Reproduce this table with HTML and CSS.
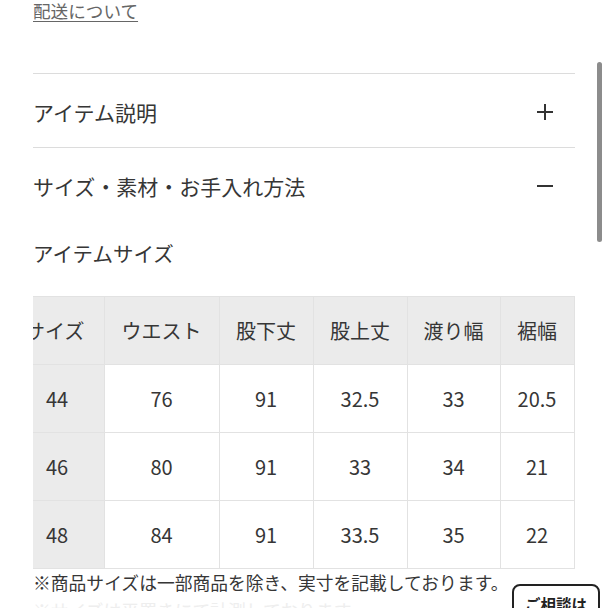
FILE: index.html
```html
<!DOCTYPE html>
<html lang="ja">
<head>
<meta charset="utf-8">
<link rel="stylesheet" href="styles.css">
</head>
<body>
<div class="page">
  <a class="ship-link" href="#">配送について</a>

  <section class="acc">
    <div class="acc-head">
      <span class="acc-title">アイテム説明</span>
      <span class="acc-icon plus"></span>
    </div>
  </section>

  <section class="acc open">
    <div class="acc-head">
      <span class="acc-title">サイズ・素材・お手入れ方法</span>
      <span class="acc-icon minus"></span>
    </div>
    <div class="acc-body">
      <h3 class="sub-title">アイテムサイズ</h3>
      <div class="table-wrap">
        <table class="size-table">
          <colgroup>
            <col class="c1"><col class="c2"><col class="c3"><col class="c4"><col class="c5"><col class="c6">
          </colgroup>
          <thead>
            <tr><th class="first">サイズ</th><th>ウエスト</th><th>股下丈</th><th>股上丈</th><th>渡り幅</th><th>裾幅</th></tr>
          </thead>
          <tbody>
            <tr><th class="first">44</th><td>76</td><td>91</td><td>32.5</td><td>33</td><td>20.5</td></tr>
            <tr><th class="first">46</th><td>80</td><td>91</td><td>33</td><td>34</td><td>21</td></tr>
            <tr><th class="first">48</th><td>84</td><td>91</td><td>33.5</td><td>35</td><td>22</td></tr>
          </tbody>
        </table>
      </div>
      <p class="note">※商品サイズは一部商品を除き、実寸を記載しております。</p>
      <p class="note faint">※サイズは平置きにて計測しております。</p>
    </div>
  </section>
</div>

<div class="scroll-thumb"></div>
<button class="chat-btn">ご相談は</button>
</body>
</html>
```

FILE: styles.css
```css
* { box-sizing: border-box; }

html, body {
  margin: 0;
  padding: 0;
  background: #fff;
  overflow: hidden;
}

body {
  font-family: "Noto Sans CJK JP", "Noto Sans", sans-serif;
  color: #363636;
}

.page {
  width: 542px;
  margin-left: 33px;
}

.ship-link {
  display: block;
  width: max-content;
  font-size: 17.6px;
  line-height: 22px;
  color: #666;
  text-decoration: underline;
  text-underline-offset: 3px;
  text-decoration-thickness: 1px;
  margin-bottom: 51px;
}

.acc {
  border-top: 1px solid #dcdcdc;
}

.acc-head {
  display: flex;
  align-items: center;
  justify-content: space-between;
  padding: 28px 0 25px;
}

.acc-title {
  font-size: 21px;
  line-height: 20px;
}

.acc-icon {
  position: relative;
  width: 16px;
  height: 16px;
  margin-right: 22px;
}

.acc-icon::before,
.acc-icon::after {
  content: "";
  position: absolute;
  background: #333;
}

.acc-icon::before {
  left: 0;
  top: 7px;
  width: 16px;
  height: 2px;
}

.plus::after {
  left: 7px;
  top: 0;
  width: 2px;
  height: 16px;
}

.minus::after { display: none; }

.acc-body {
  padding-top: 22px;
}

.sub-title {
  margin: 0;
  font-weight: normal;
  font-size: 20.5px;
  line-height: 20px;
}

.table-wrap {
  margin-top: 33px;
  width: 542px;
  overflow: hidden;
}

.size-table {
  width: 541px;
  border-collapse: collapse;
  table-layout: fixed;
  font-size: 20px;
}

.c1 { width: 71px; }
.c2 { width: 115px; }
.c3 { width: 94px; }
.c4 { width: 94px; }
.c5 { width: 93px; }
.c6 { width: 74px; }

.size-table th,
.size-table td {
  height: 68px;
  padding: 0;
  border: 1px solid #e2e2e2;
  text-align: center;
  font-weight: normal;
  white-space: nowrap;
  color: #363636;
}

.size-table thead th {
  background: #ebebeb;
}

.size-table th.first {
  background: #ebebeb;
  text-align: left;
  border-left: none;
}

.size-table thead th.first {
  text-indent: -8px;
}

.size-table tbody th.first {
  padding-left: 13px;
}

.note {
  margin: 2px 0 0;
  font-size: 17.8px;
  line-height: 22px;
  color: #363636;
  white-space: nowrap;
}

.note.faint {
  margin-top: 6px;
  color: #eeeeee;
}

.scroll-thumb {
  position: fixed;
  left: 597px;
  top: 62px;
  width: 5px;
  height: 180px;
  border-radius: 3px;
  background: #8c8c8c;
}

.chat-btn {
  position: fixed;
  left: 512px;
  top: 584px;
  width: 88px;
  height: 52px;
  padding: 9px 0 0;
  border: 2px solid #222;
  border-radius: 8px;
  background: #fff;
  font-family: "Noto Sans CJK JP", sans-serif;
  font-weight: bold;
  font-size: 15.5px;
  line-height: 18px;
  color: #222;
  display: flex;
  justify-content: center;
  align-items: flex-start;
}
```
